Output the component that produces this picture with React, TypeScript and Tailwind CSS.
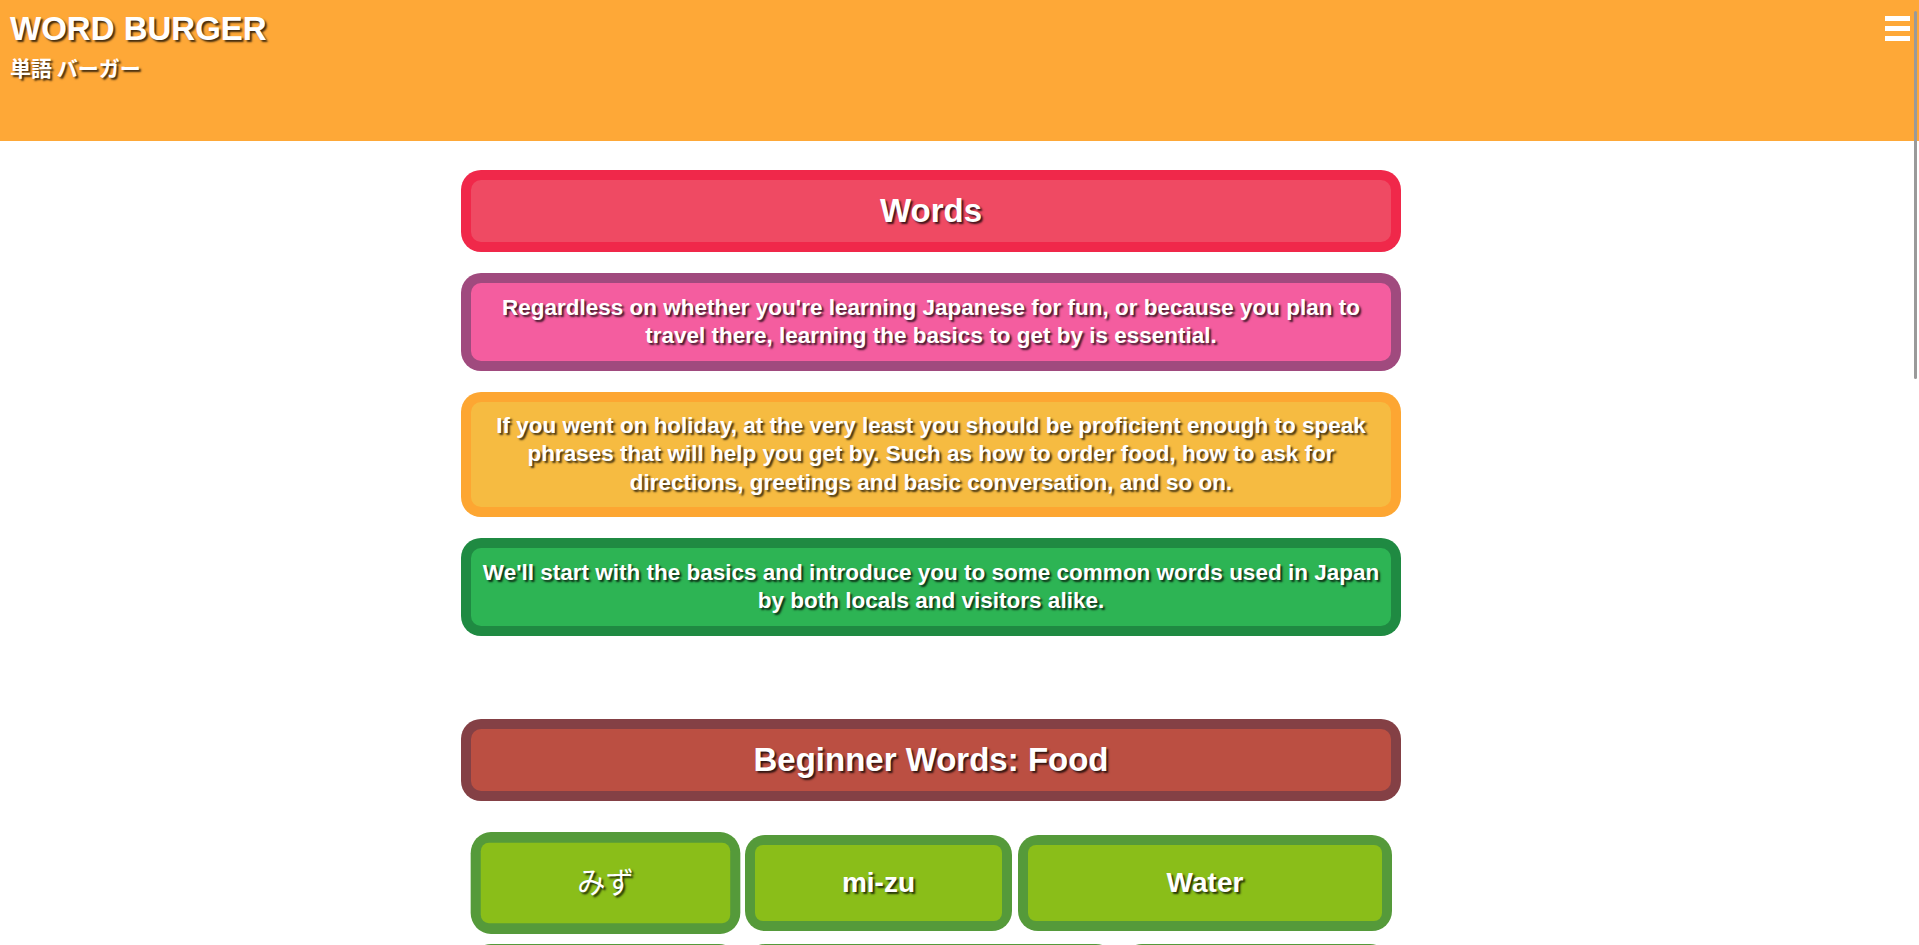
import React from "react";

type Box = {
  border: string;
  inner: string;
  text: string;
  heading?: boolean;
};

const intro: Array<Box> = [
  {
    border: "bg-[#a04a7e]",
    inner: "bg-[#f45d9f]",
    text: "Regardless on whether you're learning Japanese for fun, or because you plan to travel there, learning the basics to get by is essential.",
  },
  {
    border: "bg-[#fda632]",
    inner: "bg-[#f6bb41]",
    text: "If you went on holiday, at the very least you should be proficient enough to speak phrases that will help you get by. Such as how to order food, how to ask for directions, greetings and basic conversation, and so on.",
  },
  {
    border: "bg-[#1f8a42]",
    inner: "bg-[#2db454]",
    text: "We'll start with the basics and introduce you to some common words used in Japan by both locals and visitors alike.",
  },
];

const shadow = "[text-shadow:2px_2px_2px_rgba(0,0,0,0.75)]";

function Card({ border, inner, text, heading }: Box) {
  return (
    <div className={`${border} rounded-[20px] p-[10px]`}>
      <div
        className={`${inner} rounded-[10px] text-center text-white font-bold ${shadow} ${
          heading
            ? "py-[11px] text-[33px] leading-[40px]"
            : "py-[10.5px] px-[6px] text-[22.5px] leading-[28.3px]"
        }`}
      >
        {text}
      </div>
    </div>
  );
}

function Cell({
  text,
  width,
  hovered,
  light,
}: {
  text: string;
  width: string;
  hovered?: boolean;
  light?: boolean;
}) {
  return (
    <div
      className={`${width} h-[96px] shrink-0 rounded-[20px] bg-[#559a3a] p-[10px] ${
        hovered ? "scale-x-101 scale-y-106" : ""
      }`}
    >
      <div
        className={`h-full rounded-[8px] bg-[#8abe19] flex items-center justify-center text-white text-[28px] ${
          light ? "font-normal" : "font-bold"
        } ${shadow}`}
      >
        {text}
      </div>
    </div>
  );
}

export default function App() {
  return (
    <div
      className="relative h-[945px] overflow-hidden bg-white"
      style={{ fontFamily: '"Liberation Sans", "Noto Sans CJK JP", sans-serif' }}
    >
      {/* header */}
      <header className="h-[141px] bg-[#fea837] flex justify-between pl-[10px] pr-[9px] pt-[10px]">
        <div className={`text-white font-bold ${shadow}`}>
          <h1 className="text-[33px] leading-[37px]">WORD BURGER</h1>
          <h2 className="mt-[6px] text-[21px] leading-[28px] font-['Noto_Sans_CJK_JP',sans-serif]">
            単語 バーガー
          </h2>
        </div>
        <button className="flex flex-col gap-[5px] pt-[6px]">
          <span className="block w-[25px] h-[5px] bg-white" />
          <span className="block w-[25px] h-[5px] bg-white" />
          <span className="block w-[25px] h-[5px] bg-white" />
        </button>
      </header>

      {/* content */}
      <main className="ml-[461px] w-[940px] pt-[29px]">
        <div className="flex flex-col gap-[21px]">
          <Card
            border="bg-[#f0284a]"
            inner="bg-[#ef4a63]"
            text="Words"
            heading
          />
          {intro.map((el, i) => (
            <Card key={i} {...el} />
          ))}
        </div>

        <div className="mt-[83px]">
          <Card
            border="bg-[#844045]"
            inner="bg-[#bb4f42]"
            text="Beginner Words: Food"
            heading
          />
        </div>

        <div className="mt-[34px] ml-[11px] flex flex-col gap-[13px]">
          <div className="flex gap-[6px]">
            <Cell text="みず" width="w-[267px]" hovered light />
            <Cell text="mi-zu" width="w-[267px]" />
            <Cell text="Water" width="w-[374px]" />
          </div>
          <div className="flex gap-[6px] -ml-[1px]">
            <Cell text="" width="w-[268px]" />
            <Cell text="" width="w-[371px]" />
            <Cell text="" width="w-[268px]" />
          </div>
        </div>
      </main>

      {/* scroll indicator */}
      <div className="absolute right-[2px] top-[11px] h-[368px] w-[3px] rounded-full bg-[#9a9a9a]" />
    </div>
  );
}
